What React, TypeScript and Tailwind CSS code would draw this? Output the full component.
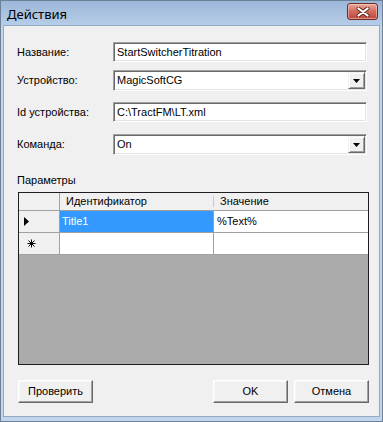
import React from 'react';

const Sunken: React.FC<{ className?: string; children?: React.ReactNode }> = ({ className = '', children }) => (
  <div
    className={`bg-white border border-t-[#a0a0a0] border-l-[#a0a0a0] border-r-[#ffffff] border-b-[#ffffff] shadow-[inset_1px_1px_0_#696969,inset_-1px_-1px_0_#e3e3e3] flex items-center ${className}`}
  >
    {children}
  </div>
);

const TextBox: React.FC<{ value: string }> = ({ value }) => (
  <Sunken className="w-[254px] h-[20px] pl-[3px]">
    <span className="text-[11px] text-black leading-none">{value}</span>
  </Sunken>
);

const ComboBox: React.FC<{ value: string }> = ({ value }) => (
  <Sunken className="w-[254px] h-[21px] pl-[3px] pr-[1px]">
    <span className="flex-1 text-[11px] text-black leading-none">{value}</span>
    <div className="w-[17px] h-[17px] bg-[#f0f0f0] border border-t-[#f0f0f0] border-l-[#f0f0f0] border-r-[#696969] border-b-[#696969] shadow-[inset_1px_1px_0_#ffffff,inset_-1px_-1px_0_#a0a0a0] flex items-center justify-center">
      <svg width="7" height="4" viewBox="0 0 7 4">
        <polygon points="0,0 7,0 3.5,4" fill="#000" />
      </svg>
    </div>
  </Sunken>
);

const Button: React.FC<{ label: string }> = ({ label }) => (
  <div className="w-[75px] h-[23px] bg-[#f0f0f0] border border-t-[#ffffff] border-l-[#ffffff] border-r-[#696969] border-b-[#696969] shadow-[inset_-1px_-1px_0_#a0a0a0,inset_1px_1px_0_#f7f7f7] flex items-center justify-center">
    <span className="text-[11px] text-black leading-none">{label}</span>
  </div>
);

const Row: React.FC<{ label: string; className?: string; children: React.ReactNode }> = ({ label, className = '', children }) => (
  <div className={`flex items-center ${className}`}>
    <span className="w-[96px] text-[11px] text-black leading-none">{label}</span>
    {children}
  </div>
);

export default function App() {
  return (
    <div className="w-[383px] h-[422px] flex flex-col bg-[#c2d5eb] border border-[#6d8299] font-['Liberation_Sans',Arial,sans-serif] overflow-hidden">
      {/* title bar */}
      <div className="h-[24px] flex items-center justify-between pl-[6px] pr-[4px] bg-gradient-to-b from-[#9bb7d8] to-[#b6cde8]">
        <span className="text-[13px] text-black font-['Noto_Sans',sans-serif] leading-none pt-[2px]">Действия</span>
        <div className="w-[31px] h-[17px] -mt-[3px] rounded-[3px] border border-[#6e2a24] bg-gradient-to-b from-[#e9a99c] via-[#d26a5c] to-[#c0463a] shadow-[inset_0_0_0_1px_rgba(255,220,210,0.5)] flex items-center justify-center">
          <svg width="14" height="10" viewBox="0 0 14 10">
            <path d="M2.5 1.5 L11.5 8.5 M11.5 1.5 L2.5 8.5" stroke="#5a2a25" strokeWidth="4" strokeLinecap="round" />
            <path d="M2.5 1.5 L11.5 8.5 M11.5 1.5 L2.5 8.5" stroke="#ffffff" strokeWidth="2.2" strokeLinecap="round" />
          </svg>
        </div>
      </div>

      {/* body */}
      <div className="flex-1 mx-[2px] mb-[4px] bg-[#f0f0f0] border border-[#93aac4] flex flex-col pl-[13px] pr-[12px]">
        <Row label="Название:" className="mt-[16px]">
          <TextBox value="StartSwitcherTitration" />
        </Row>
        <Row label="Устройство:" className="mt-[8px]">
          <ComboBox value="MagicSoftCG" />
        </Row>
        <Row label="Id устройства:" className="mt-[11px]">
          <TextBox value="C:\TractFM\LT.xml" />
        </Row>
        <Row label="Команда:" className="mt-[12px]">
          <ComboBox value="On" />
        </Row>

        <span className="mt-[20px] text-[11px] text-black leading-none">Параметры</span>

        {/* grid */}
        <div className="mt-[6px] ml-[1px] w-[351px] h-[173px] border border-[#1e1e1e] bg-[#ababab] flex flex-col">
          <div className="flex h-[18px] bg-[#f0f0f0] border-b border-[#a0a0a0]">
            <div className="w-[41px] border-r border-[#a0a0a0]" />
            <div className="w-[154px] flex items-center pl-[6px] relative">
              <span className="text-[11px] text-black leading-none">Идентификатор</span>
              <div className="absolute right-0 top-[3px] bottom-[3px] w-px bg-[#c8c8c8]" />
            </div>
            <div className="flex-1 flex items-center pl-[6px]">
              <span className="text-[11px] text-black leading-none">Значение</span>
            </div>
          </div>
          <div className="flex h-[22px] border-b border-[#a0a0a0]">
            <div className="w-[41px] bg-[#f0f0f0] border-r border-[#a0a0a0] flex items-center pl-[5px]">
              <svg width="5" height="9" viewBox="0 0 5 9">
                <polygon points="0,0 5,4.5 0,9" fill="#000" />
              </svg>
            </div>
            <div className="w-[154px] bg-[#3399ff] border-r border-[#a0a0a0] flex items-center pl-[2px]">
              <span className="text-[11px] text-white leading-none">Title1</span>
            </div>
            <div className="flex-1 bg-white flex items-center pl-[3px]">
              <span className="text-[11px] text-black leading-none">%Text%</span>
            </div>
          </div>
          <div className="flex h-[22px] border-b border-[#a0a0a0]">
            <div className="w-[41px] bg-[#f0f0f0] border-r border-[#a0a0a0] flex items-center pl-[8px]">
              <svg width="9" height="9" viewBox="0 0 9 9">
                <path d="M4.5 0.5 V8.5 M0.5 4.5 H8.5 M1.5 1.5 L7.5 7.5 M7.5 1.5 L1.5 7.5" stroke="#000" strokeWidth="1" />
              </svg>
            </div>
            <div className="w-[154px] bg-white border-r border-[#a0a0a0]" />
            <div className="flex-1 bg-white" />
          </div>
        </div>

        {/* buttons */}
        <div className="mt-[15px] ml-[1px] w-[351px] flex items-center">
          <Button label="Проверить" />
          <div className="flex-1" />
          <Button label="OK" />
          <div className="w-[6px]" />
          <Button label="Отмена" />
        </div>
      </div>
    </div>
  );
}
